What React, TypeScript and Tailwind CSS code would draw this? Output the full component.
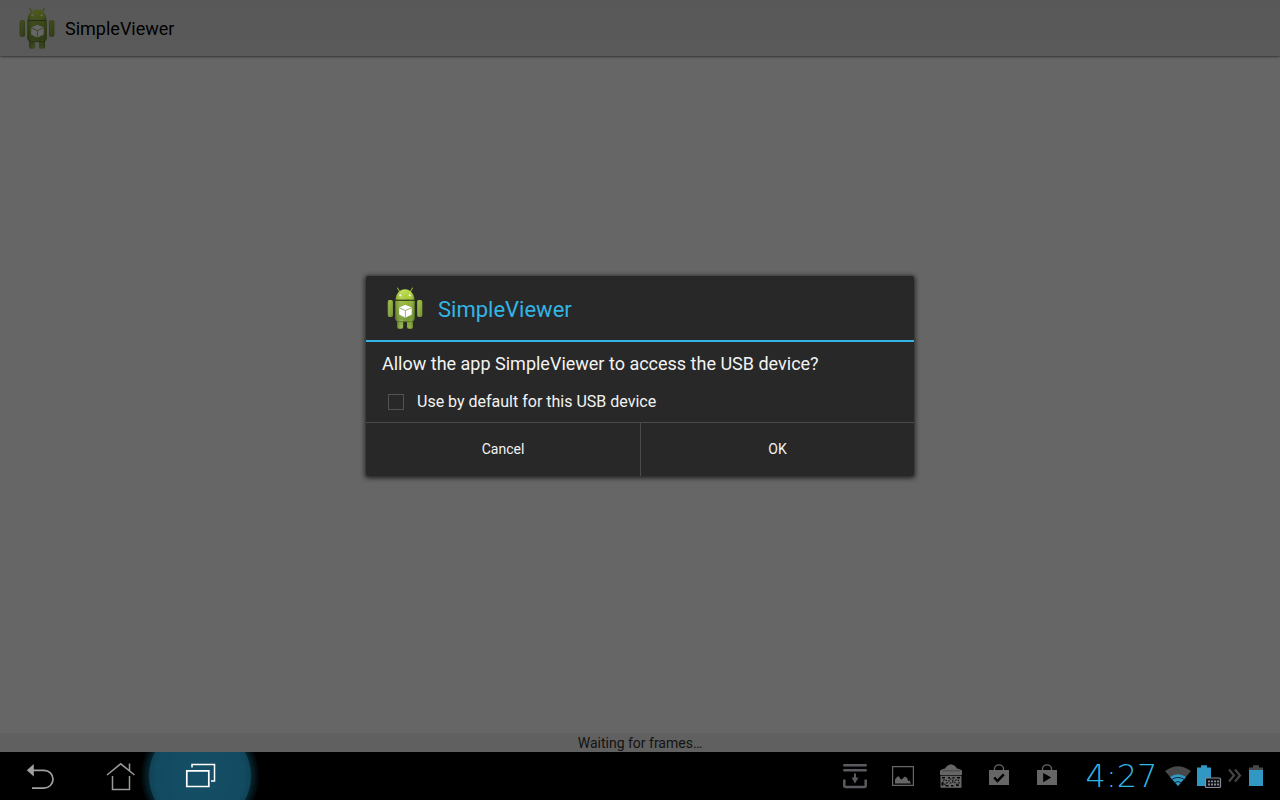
import { useId, type ReactNode } from "react";

function RobotIcon() {
  const id = useId();
  const shade = `${id}-shade`;
  const shapes = (
    <>
      <path d="M20.600 19.800C20.800 13.400 25 9.200 30 9.200s9.200 4.200 9.400 10.600z" />
      <rect x="12.700" y="20" width="5.300" height="17" rx="2" />
      <rect x="42" y="20" width="5.300" height="17" rx="2" />
      <path d="M22.200 40h6v6.800q0 1.900-1.900 1.900h-2.200q-1.900 0-1.900-1.900zM32 40h6v6.800q0 1.900-1.900 1.900h-2.200q-1.900 0-1.900-1.900z" />
      <path d="M20.300 21h19.400v17q0 3.400-3.400 3.400H23.700q-3.400 0-3.400-3.400z" />
    </>
  );
  return (
    <svg viewBox="12 7 36 42" className="h-[42px] w-9 shrink-0" aria-hidden="true">
      <defs>
        <linearGradient id={id} x1="0" y1="8" x2="0" y2="49" gradientUnits="userSpaceOnUse">
          <stop offset="0" stopColor="#c0e04a" />
          <stop offset="0.250" stopColor="#a6c935" />
          <stop offset="0.320" stopColor="#93b535" />
          <stop offset="0.750" stopColor="#739530" />
          <stop offset="1" stopColor="#8fb33c" />
        </linearGradient>
        <linearGradient id={shade}>
          <stop offset="0" stopColor="#2f4408" stopOpacity="0.300" />
          <stop offset="0.300" stopColor="#fff" stopOpacity="0.120" />
          <stop offset="0.700" stopColor="#fff" stopOpacity="0" />
          <stop offset="1" stopColor="#2f4408" stopOpacity="0.400" />
        </linearGradient>
      </defs>
      <path d="M22.500 8l2.400 4M37.500 8l-2.400 4" stroke="#8fb32b" strokeWidth="1.100" strokeLinecap="round" />
      <g fill={`url(#${id})`}>{shapes}</g>
      <g fill={`url(#${shade})`}>{shapes}</g>
      <path d="M20.500 20.400h19" stroke="#3d5213" strokeWidth="0.900" />
      <path d="M21.500 40.900q1 .700 2.500.700h12q1.500 0 2.500-.700" stroke="#587520" strokeWidth="0.800" fill="none" />
      <circle cx="25.300" cy="15.300" r="1.100" fill="#f7ffe0" />
      <circle cx="34.700" cy="15.300" r="1.100" fill="#f7ffe0" />
      <path d="M30.400 24.800l6.300 2.600v7l-6.300 3.400-6.200-3.400v-7z" fill="#fff" />
      <path d="M24.400 27.800l6 2.800 6.200-2.800M30.400 30.600v7" stroke="#8fa860" strokeWidth="0.900" fill="none" />
    </svg>
  );
}

function NavButton({ label, children }: { label: string; children: ReactNode }) {
  return (
    <button type="button" aria-label={label} className="flex h-12 w-20 items-center justify-center">
      {children}
    </button>
  );
}

function NavigationIcons() {
  return (
    <nav className="flex" aria-label="System navigation">
      <NavButton label="Back">
        <svg viewBox="0 0 80 48" className="h-12 w-20" fill="none">
          <path d="M33 18.300h11a9 8.900 0 0 1 0 17.800H32" stroke="#a0a0a0" strokeWidth="1.700" />
          <path d="M26.800 18.300l7-6.300v12.600z" fill="#a0a0a0" />
        </svg>
      </NavButton>
      <NavButton label="Home">
        <svg viewBox="80 0 80 48" className="h-12 w-20" fill="none" stroke="#999" strokeWidth="1.500">
          <path d="M107 23l13.700-11.200L134.500 23M129.500 18.500V11.500M112.500 24v13.500h17V24" />
        </svg>
      </NavButton>
      <NavButton label="Recent apps">
        <svg viewBox="140 0 120 48" className="h-12 w-[120px] shrink-0" fill="none">
          <defs>
            <radialGradient id="recent-glow">
              <stop offset="0" stopColor="#155068" />
              <stop offset="0.750" stopColor="#124a60" />
              <stop offset="0.840" stopColor="#0f4358" />
              <stop offset="0.860" stopColor="#06222c" />
              <stop offset="1" stopColor="#000" />
            </radialGradient>
          </defs>
          <circle cx="200" cy="24" r="60" fill="url(#recent-glow)" />
          <path d="M192 15.500v-3h22.500V29H211" stroke="#fff" strokeWidth="1.500" />
          <path d="M186.800 18.800h22v15.700h-22z" stroke="#fff" strokeWidth="1.700" />
        </svg>
      </NavButton>
    </nav>
  );
}

function NotificationIcons() {
  return (
    <div className="flex gap-6 text-[#666]">
      <svg viewBox="843 12 24 26" className="h-[26px] w-6" fill="none" stroke="#5d5960" strokeWidth="2.500">
        <path d="M844.300 14.300h21.400M844.300 19.200h21.400" strokeLinecap="round" />
        <path d="M844.300 28.500v6q0 1.500 1.500 1.500h18.400q1.500 0 1.500-1.500v-6" />
        <path d="M855 22.500v5" strokeWidth="2" />
        <path d="M851.500 26.500h7l-3.500 6z" fill="#5d5960" stroke="none" />
      </svg>
      <svg viewBox="891 12 24 26" className="h-[26px] w-6" fill="none" stroke="currentColor" strokeWidth="1.200">
        <path d="M892.600 15.600h20.800v18.800h-20.800z" />
        <path d="M895 32.500v-4l2.500-3h1.500l1.500 2.500 1 .5 3.500-3 2.500 2 .5 2.500 1.500-.5 1.500 3z" fill="currentColor" stroke="none" />
      </svg>
      <svg viewBox="939 12 24 26" className="h-[26px] w-6" fill="currentColor">
        <path d="M940 24v-4q0-1.500 5-2.500 2.500-4 6-4.300 3.500.3 6 4.300 5 1 5 2.500v4z" />
        <path d="M940.500 25h21V36.800h-21z" />
        <path d="M942 19.800h18M941 24.600h20" stroke="#393939" strokeWidth="0.700" />
        <path d="M942 26h3v1.500h-3zM948 26h2v1.500h-2zM952.500 26h2v1.500h-2zM957 26h3v1.500h-3zM941.500 31.500h2v3h-2zM945.500 34h3v1.500h-3zM951 34h2.500v1.500H951zM956 33.500h3v1.500h-3z" fill="#050505" />
        <g fill="none" stroke="#080808" strokeWidth="1.100" strokeDasharray="1.500 1">
          <circle cx="945" cy="31" r="2.200" />
          <circle cx="951" cy="30" r="2" />
          <circle cx="957" cy="31" r="2.200" />
        </g>
      </svg>
      <svg viewBox="987 12 24 26" className="h-[26px] w-6">
        <path d="M994.500 19v-1.200a4.500 4 0 0 1 9 0V19" fill="none" stroke="currentColor" strokeWidth="1.300" />
        <path d="M989 19h20v15h-20z" fill="currentColor" />
        <path d="M994.200 26.500l3.300 3.500 6.300-6.700" fill="none" stroke="#000" strokeWidth="2.500" />
      </svg>
      <svg viewBox="1035 12 24 26" className="h-[26px] w-6">
        <path d="M1042.500 19v-1.200a4.500 4 0 0 1 9 0V19" fill="none" stroke="currentColor" strokeWidth="1.300" />
        <path d="M1037 19h20v15h-20z" fill="currentColor" />
        <path d="M1043.200 22v9.200l8-4.600z" fill="#000" />
      </svg>
    </div>
  );
}

function StatusIcons() {
  return (
    <svg
      viewBox="1164 0 100 48"
      className="h-12 w-[100px]"
      role="img"
      aria-label="Wi-Fi, keyboard dock battery and tablet battery"
    >
      <path d="M1165 19q13-9.500 26 0l-13 15z" fill="#484848" />
      <path d="M1170 25q8-5.500 16 0l-8 9z" fill="#3198c4" />
      <path d="M1171.500 27.500q6.500-4 13 0M1174.500 30.700q3.500-2.300 7 0" fill="none" stroke="#0a2a38" strokeWidth="1" />
      <path d="M1197 15.500h4V13.200h6v2.300h4V34h-14z" fill="#3198c4" />
      <rect x="1205.500" y="26" width="15" height="9.500" rx="1" fill="#0a0c10" stroke="#8a8d98" strokeWidth="1.200" />
      <path d="M1208 29.300h11M1208 32.500h11" stroke="#858893" strokeWidth="1.800" strokeDasharray="2 1" />
      <path d="M1229 17.500l5 6-5 6M1235 17.500l5 6-5 6" fill="none" stroke="#444" strokeWidth="2.200" />
      <path d="M1249 15.500h4V13.200h6v2.300h4v3.500h-14z" fill="#484848" />
      <path d="M1249 18h14v16h-14z" fill="#3198c4" />
    </svg>
  );
}

function PermissionDialog() {
  return (
    <form
      role="dialog"
      aria-labelledby="dialog-title"
      className="w-[548px] max-w-full rounded-xs bg-[#282828] text-[#f3f3f3] shadow-[0_1px_5px_1px_rgba(0,0,0,0.7)]"
    >
      <div className="flex h-[66px] items-center gap-[15px] border-b-2 border-[#33b5e5] pr-4 pl-[21px]">
        <RobotIcon />
        <h2 id="dialog-title" className="pt-1 text-[22px] leading-7 text-[#33b5e5]">
          SimpleViewer
        </h2>
      </div>
      <p className="px-4 pt-2.5 pb-1.5 text-[18px] leading-6">
        Allow the app SimpleViewer to access the USB device?
      </p>
      <label className="flex h-10 items-center gap-[13px] px-[22px] text-[16px]">
        <input
          type="checkbox"
          className="size-4 appearance-none border border-[#535353] checked:bg-[#33b5e5]"
        />
        Use by default for this USB device
      </label>
      <div className="grid h-[54px] grid-cols-2 border-t border-[#4b4b4b] text-[14px]">
        <button type="button">Cancel</button>
        <button type="button" className="border-l border-[#4b4b4b]">
          OK
        </button>
      </div>
    </form>
  );
}

export default function App() {
  return (
    <div className="flex min-h-screen flex-col bg-black font-['Roboto',sans-serif]">
      <main className="relative flex flex-1 flex-col bg-white">
        <header className="flex h-14 items-center gap-[10px] bg-linear-to-b from-[#dddddd] to-[#e0e0e0] pl-[19px] shadow-[0_1px_2px_rgba(0,0,0,0.5)]">
          <RobotIcon />
          <h1 className="text-[18px] text-black">SimpleViewer</h1>
        </header>
        <div className="flex-1" />
        <p className="h-[19px] bg-[#efefef] text-center text-[14px] leading-[21px] text-[#333]">Waiting for frames…</p>
        <div className="absolute inset-0 flex items-center justify-center bg-black/60">
          <PermissionDialog />
        </div>
      </main>
      <footer className="flex h-12 items-center justify-between bg-black pr-4">
        <NavigationIcons />
        <div className="flex items-center">
          <NotificationIcons />
          <time className="ml-5 w-[85px] text-center font-['DejaVu_Sans_Light','DejaVu_Sans',sans-serif] text-[32px] leading-10 font-extralight text-[#33b5e5]">
            4:27
          </time>
          <StatusIcons />
        </div>
      </footer>
    </div>
  );
}
